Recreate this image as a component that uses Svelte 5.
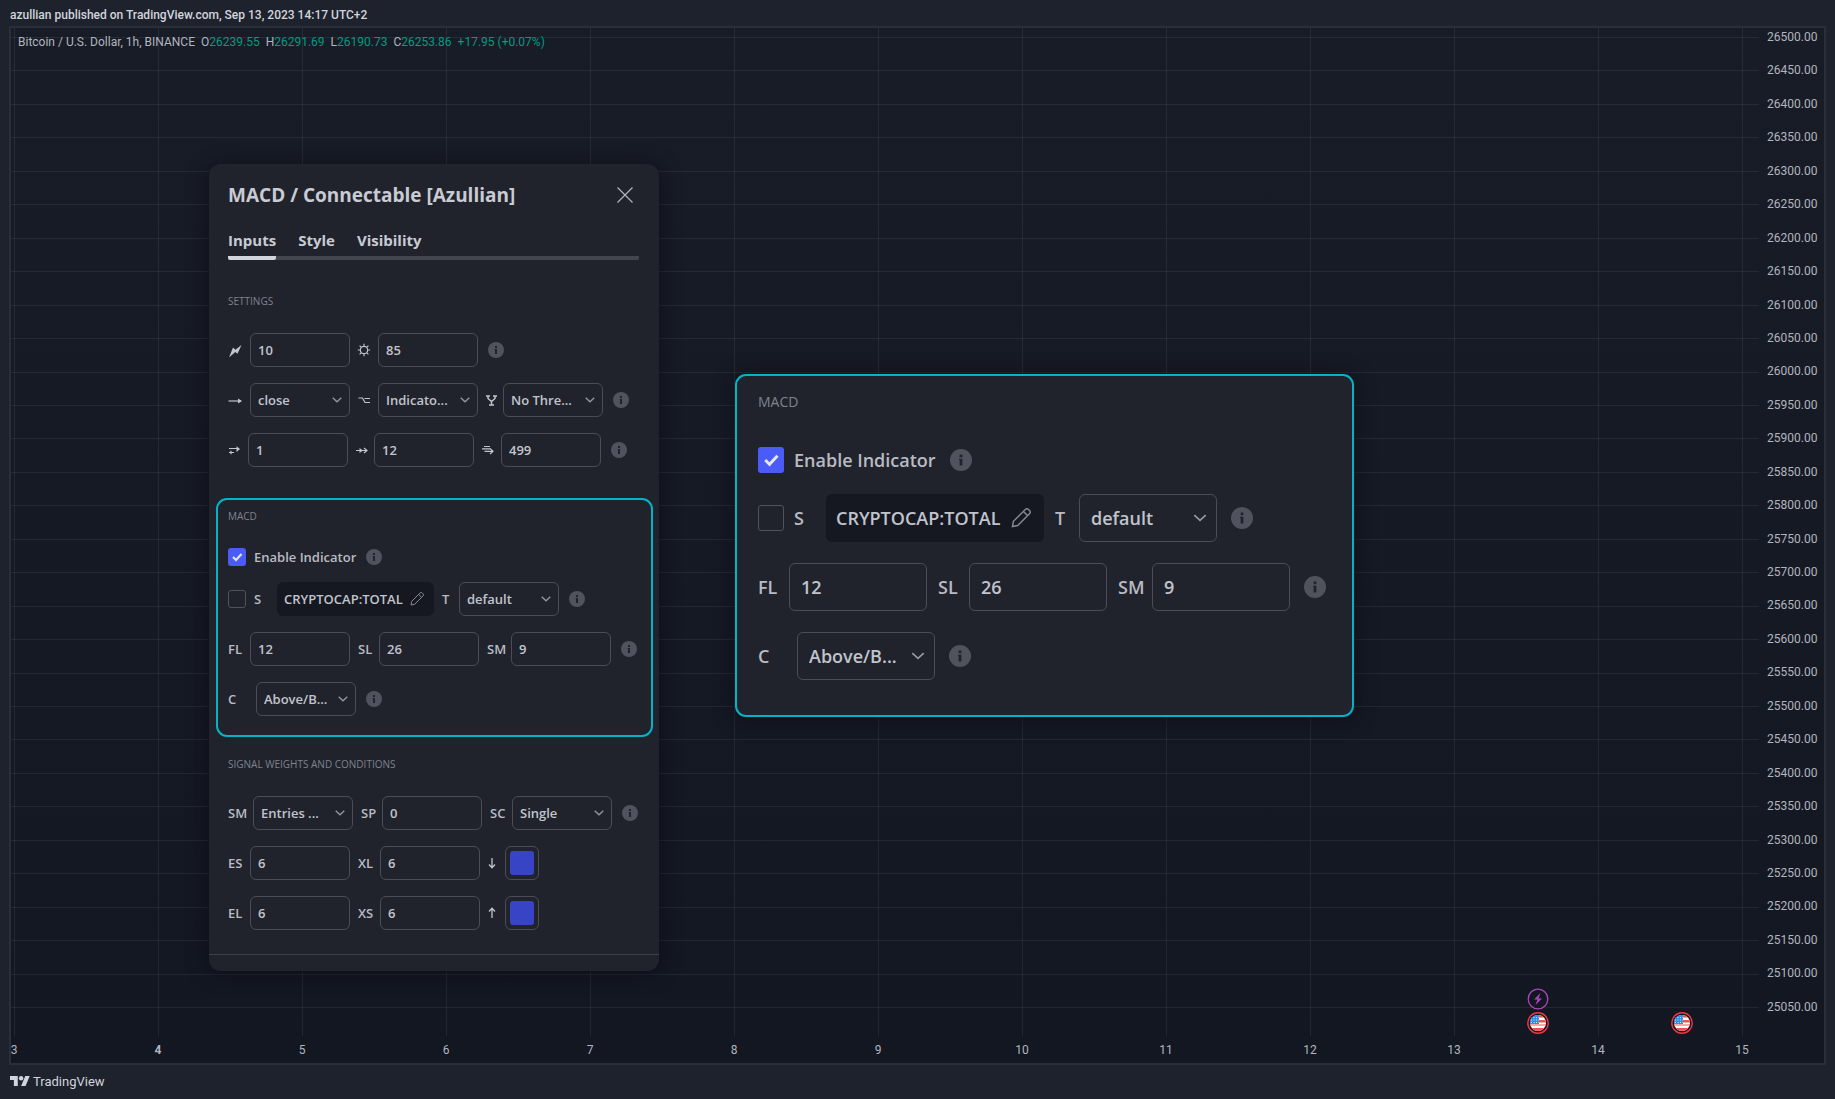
<script>
  const prices = Array.from({ length: 30 }, (_, i) => (26500 - i * 50).toFixed(2));
  const days = Array.from({ length: 13 }, (_, i) => i + 3);

  // plot coordinates as a share of the plotting area
  const xOf = (day) => ((3.5 + (day - 3) * 144) / 1748) * 100;
  const yOf = (row) => ((9.5 + row * 33.45) / 1008) * 100;

  const ohlc = [
    ['O', '26239.55'],
    ['H', '26291.69'],
    ['L', '26190.73'],
    ['C', '26253.86']
  ];
</script>

{#snippet info()}
  <button class="info" aria-label="More information">
    <svg viewBox="0 0 16 16"><circle cx="8" cy="8" r="8" fill="#50535e" /><path d="M7 4h2v2H7zM6.6 7H9v5H7V8h-.4z" fill="#20232c" /></svg>
  </button>
{/snippet}

{#snippet field(label, value)}
  <input class="box" type="text" aria-label={label} {value} />
{/snippet}

{#snippet choice(label, value)}
  <div class="choice">
    <select class="box" aria-label={label}><option>{value}</option></select>
    <svg class="chevron" viewBox="0 0 10 6"><path d="M.7.8 5 4.8 9.3.8" /></svg>
  </div>
{/snippet}

{#snippet icon(name)}
  <svg class="icon" viewBox="0 0 14 14" aria-hidden="true">
    {#if name === 'bolt'}
      <path class="solid" d="M13.500 2 9.500 10.800 7.300 9 1 14.500 5 4.500 7.400 6.800z" />
    {:else if name === 'sun'}
      <circle cx="7" cy="7" r="3.700" />
      <path d="M7 .8v2M7 11.200v2M.8 7h2M11.200 7h2M2.600 2.600l1.500 1.500M9.900 9.900l1.500 1.500M2.600 11.400l1.500-1.500M9.900 4.100l1.500-1.500" />
    {:else if name === 'right'}
      <path d="M.5 8h12.500" /><path class="solid" d="M10 5.500 14 8 10 10.500z" />
    {:else if name === 'option'}
      <path d="M1.500 5h4l2.500 4.500h5M7.500 5.500h5.500" />
    {:else if name === 'fork'}
      <path stroke-width="1.500" d="M1 3h4M8 3h4M3 3v2.500L6.500 8.500 10 5.500V3M6.500 8.500V11.700M4 12h5" />
    {:else if name === 'swap'}
      <path d="M1 5.500h10M1 9.500h5M3 7.800v3.400" /><path class="solid" d="M8.500 3.300 12 6 8.500 9V6z" />
    {:else if name === 'double'}
      <path d="M1 7.500h10.500M9 5l3 2.500L9 10" /><path class="solid" d="M4.500 5 8 7.500 4.500 10z" />
    {:else if name === 'layers'}
      <path d="M3 3.500h6M1 5.800h8M3.500 8.300h8M9 5.500l3 2.800L9 11" />
    {/if}
  </svg>
{/snippet}

{#snippet macd(id)}
  <h2>MACD</h2>
  <div class="check-row">
    <input type="checkbox" id="{id}-enable" checked />
    <label for="{id}-enable">Enable Indicator</label>
    {@render info()}
  </div>
  <div class="row r-symbol">
    <input type="checkbox" id="{id}-symbol" />
    <label for="{id}-symbol">S</label>
    <button class="symbol">
      CRYPTOCAP:TOTAL
      <svg viewBox="0 0 14 14"><path d="M1 13l.7-3.700L10.200.9a1.300 1.300 0 0 1 1.900 0l1 1a1.300 1.300 0 0 1 0 1.900L4.700 12.300zM8.700 2.500l2.800 2.800" /></svg>
    </button>
    <span class="tag">T</span>
    {@render choice('T', 'default')}
    {@render info()}
  </div>
  <div class="row r-lengths">
    <span>FL</span>
    {@render field('FL', '12')}
    <span class="tag">SL</span>
    {@render field('SL', '26')}
    <span class="tag">SM</span>
    {@render field('SM', '9')}
    {@render info()}
  </div>
  <div class="row r-condition">
    <span>C</span>
    {@render choice('C', 'Above/B...')}
    {@render info()}
  </div>
{/snippet}

{#snippet flag()}
  <svg viewBox="0 0 22 22">
    <defs><clipPath id="flag-disc"><circle cx="11" cy="11" r="8" /></clipPath></defs>
    <circle cx="11" cy="11" r="10.200" fill="#131722" stroke="#f23645" stroke-width="1.400" />
    <g clip-path="url(#flag-disc)">
      <path fill="#fff" d="M3 3h16v16H3z" />
      <path fill="#ef5350" d="M3 3h16v2.500H3zM3 8h16v2.500H3zM3 12.500h16v1H3zM3 16h16v3H3z" />
      <path fill="#2f8fea" d="M3 3h9v9H3z" />
      <path stroke="#cfe6fb" stroke-width="1" stroke-dasharray="1 1.500" d="M4 5.500h8M4 8h8M4 10.500h8" />
    </g>
  </svg>
{/snippet}

<div class="page">
  <header>azullian published on TradingView.com, Sep 13, 2023 14:17 UTC+2</header>

  <main>
    <div class="plot">
      <svg class="grid" aria-hidden="true">
        {#each days as day}
          <line x1="{xOf(day)}%" x2="{xOf(day)}%" y1="0" y2="100%" />
        {/each}
        {#each prices as _, i}
          <line x1="0" x2="100%" y1="{yOf(i)}%" y2="{yOf(i)}%" />
        {/each}
      </svg>
      <div class="legend">
        <span>Bitcoin / U.S. Dollar, 1h, BINANCE</span>
        {#each ohlc as [k, v]}<span>{k}<b>{v}</b></span>{/each}
        <b>+17.95 (+0.07%)</b>
      </div>
      <div class="event" style:left="{xOf(13.577)}%">
        <svg viewBox="0 0 22 22"><circle cx="11" cy="11" r="9.800" fill="#131722" stroke="#ab47bc" stroke-width="1.300" /><path fill="#ab47bc" d="M13.500 5 7 11.500h3.500L8.500 17 15 10.500h-3.500z" /></svg>
        {@render flag()}
      </div>
      <div class="event" style:left="{xOf(14.577)}%">{@render flag()}</div>
    </div>
    <div class="prices">{#each prices as p}<span>{p}</span>{/each}</div>
    <div class="days">{#each days as d}<span class:strong={d === 4}>{d}</span>{/each}</div>

    <section class="dialog" aria-label="Indicator settings">
      <div class="title">
        <h1>MACD / Connectable [Azullian]</h1>
        <button aria-label="Close"><svg viewBox="0 0 16 16"><path d="M.5.5l15 15M15.500.5l-15 15" /></svg></button>
      </div>
      <nav>
        <button class="active">Inputs</button>
        <button>Style</button>
        <button>Visibility</button>
      </nav>

      <div class="group settings">
        <h2>SETTINGS</h2>
        <div class="row r-one">
          {@render icon('bolt')}
          {@render field('Weight', '10')}
          <span class="tag">{@render icon('sun')}</span>
          {@render field('Brightness', '85')}
          {@render info()}
        </div>
        <div class="row r-two">
          {@render icon('right')}
          {@render choice('Source', 'close')}
          <span class="tag">{@render icon('option')}</span>
          {@render choice('Mode', 'Indicato...')}
          <span class="tag">{@render icon('fork')}</span>
          {@render choice('Threshold', 'No Thre...')}
          {@render info()}
        </div>
        <div class="row r-three">
          {@render icon('swap')}
          {@render field('Offset', '1')}
          <span class="tag">{@render icon('double')}</span>
          {@render field('Length', '12')}
          <span class="tag">{@render icon('layers')}</span>
          {@render field('Limit', '499')}
          {@render info()}
        </div>
      </div>

      <div class="group outlined">{@render macd('panel')}</div>

      <div class="group weights">
        <h2>SIGNAL WEIGHTS AND CONDITIONS</h2>
        <div class="row r-signal">
          <span>SM</span>
          {@render choice('SM', 'Entries ...')}
          <span class="tag">SP</span>
          {@render field('SP', '0')}
          <span class="tag">SC</span>
          {@render choice('SC', 'Single')}
          {@render info()}
        </div>
        {#each [['ES', 'XL', 'down'], ['EL', 'XS', 'up']] as [a, b, dir]}
          <div class="row r-exit">
            <span>{a}</span>
            {@render field(a, '6')}
            <span class="tag">{b}</span>
            {@render field(b, '6')}
            <span class="tag"><svg class="arrow" class:up={dir === 'up'} viewBox="0 0 8 12"><path d="M4 1v9.500M1 7.500l3 3.200 3-3.200" /></svg></span>
            <button class="swatch" aria-label="Colour {dir}"><span></span></button>
          </div>
        {/each}
      </div>
      <div class="foot"></div>
    </section>

    <section class="magnified group outlined" aria-label="MACD inputs">{@render macd('zoom')}</section>
  </main>

  <footer>
    <svg viewBox="0 4 36 18"><path d="M14 22H7V11H0V4h14v18zM28 22h-8l7.500-18h8L28 22z" /><circle cx="20" cy="8" r="4" /></svg>
    TradingView
  </footer>
</div>

<style>
  :global(body) {
    margin: 0;
  }
  .page,
  .page * {
    box-sizing: border-box;
  }
  .page {
    min-height: 100vh;
    display: flex;
    flex-direction: column;
    padding: 0 9px;
    background: #1e222d;
    color: #d1d4dc;
    font-family: 'Trebuchet MS', Roboto, sans-serif;
    font-size: 12px;
  }
  button,
  input,
  select {
    margin: 0;
    padding: 0;
    border: 0;
    background: none;
    color: inherit;
    font: inherit;
  }
  svg {
    display: block;
    flex: none;
  }
  header {
    height: 26px;
    padding: 0 1px;
    line-height: 30px;
    font-weight: 500;
    font-size: 12px;
    overflow: visible;
    white-space: nowrap;
  }
  main {
    position: relative;
    flex: 1;
    display: grid;
    grid-template: minmax(0, 1fr) 27px / minmax(0, 1fr) 65px;
    border: 2px solid #2a2e39;
    background: linear-gradient(#181c27, #131722);
    color: #b2b5be;
  }
  .plot {
    position: relative;
  }
  .grid {
    width: 100%;
    height: 100%;
    shape-rendering: crispEdges;
  }
  .grid line {
    stroke: #f0f3fa;
    stroke-opacity: 0.07;
  }
  .legend {
    position: absolute;
    top: 6px;
    left: 7px;
    display: flex;
    gap: 6px;
    line-height: 16px;
    white-space: nowrap;
  }
  .legend b {
    color: #089981;
    font-weight: 400;
  }
  .event {
    position: absolute;
    bottom: 2px;
    width: 22px;
    margin-left: -11px;
    display: grid;
    gap: 2px;
  }
  .prices {
    display: flex;
    flex-direction: column;
    justify-content: space-between;
    padding: 1px 8px 21px;
    line-height: 16px;
  }
  .days {
    display: flex;
    justify-content: space-between;
    padding-right: 14px;
    line-height: 28px;
  }
  .days span {
    display: flex;
    justify-content: center;
    width: 6px;
  }
  .days .strong {
    font-weight: 700;
  }

  .dialog {
    position: absolute;
    top: 136px;
    left: 198px;
    width: 450px;
    border-radius: 12px;
    background: #20232c;
    box-shadow: 0 2px 20px rgba(10, 12, 20, 0.7);
  }
  .title {
    display: flex;
    align-items: center;
    justify-content: space-between;
    height: 62px;
    padding: 0 26px 0 19px;
  }
  h1,
  nav,
  .group {
    font-family: 'Trebuchet MS', 'Open Sans', sans-serif;
  }
  h1 {
    margin: 0;
    font-size: 19px;
    font-weight: 700;
    color: #c9cbd3;
  }
  .title svg {
    width: 16px;
    height: 16px;
    fill: none;
    stroke: #b2b5be;
    stroke-width: 1.2;
  }
  nav {
    display: flex;
    gap: 22px;
    height: 34px;
    margin: 0 20px 0 19px;
    border-radius: 2px;
    background: linear-gradient(#434651, #434651) bottom / 100% 4px no-repeat;
    font-size: 15px;
    font-weight: 700;
    line-height: 26px;
    color: #c9cbd3;
  }
  nav button {
    padding-bottom: 6px;
  }
  nav .active {
    border-bottom: 4px solid #d1d4dc;
    border-radius: 2px;
    padding-bottom: 2px;
  }
  .group {
    --h: 34px;
    --pad: 7px;
    --dot: 16px;
    --lead: 10px;
    --tick: 18px;
    font-size: 13px;
    font-weight: 600;
    color: #b9bbc3;
  }
  h2 {
    margin: 0;
    font-size: 10px;
    font-weight: 400;
    line-height: 16px;
    color: #7f828c;
  }
  .settings {
    padding: 33px 19px 31px;
  }
  .settings h2,
  .weights h2 {
    margin-bottom: 24px;
  }
  .row {
    display: grid;
    align-items: center;
    height: var(--h);
    white-space: nowrap;
  }
  .row + .row {
    margin-top: 16px;
  }
  .r-two {
    grid-template-columns: 22px 100px 28px 100px 25px 100px auto;
  }
  .r-one {
    grid-template-columns: 22px 100px 28px 100px auto;
  }
  .r-three {
    grid-template-columns: 20px 100px 26px 100px 27px 100px auto;
  }
  .r-symbol {
    grid-template-columns: 26px 23px 157px 25px 100px auto;
  }
  .r-lengths {
    grid-template-columns: 22px 100px 29px 100px 32px 100px auto;
  }
  .r-condition {
    grid-template-columns: 28px 100px auto;
  }
  .r-signal {
    grid-template-columns: 25px 100px 29px 100px 30px 100px auto;
  }
  .r-exit {
    grid-template-columns: 22px 100px 30px 100px 25px 34px;
  }
  .tag {
    padding-left: 8px;
  }
  .settings .tag {
    padding-left: 7px;
  }
  .icon {
    width: 14px;
    height: 14px;
    fill: none;
    stroke: #c1c4cc;
    stroke-width: 1.2;
  }
  .icon .solid {
    fill: #c1c4cc;
    stroke: none;
  }
  .box {
    width: 100%;
    height: var(--h);
    padding: 0 var(--pad);
    border: 1px solid #4a4d57;
    border-radius: 6px;
    color: #c1c4cc;
    appearance: none;
    outline: 0;
  }
  .choice {
    display: grid;
    align-items: center;
  }
  .choice > * {
    grid-area: 1 / 1;
  }
  .chevron {
    width: 10px;
    height: 6px;
    margin-right: 8px;
    justify-self: end;
    pointer-events: none;
    fill: none;
    stroke: #9598a1;
    stroke-width: 1.3;
  }
  .info {
    width: var(--dot);
    height: var(--dot);
    margin-left: var(--lead);
  }
  input[type='checkbox'] {
    width: var(--tick);
    height: var(--tick);
    border: 1px solid #50535e;
    border-radius: 3px;
    appearance: none;
  }
  input[type='checkbox']:checked {
    border: 0;
    background: #4a5cf5 url("data:image/svg+xml,%3Csvg xmlns='http://www.w3.org/2000/svg' viewBox='0 0 18 18'%3E%3Cpath d='M5 9l3 3 5.500-6' fill='none' stroke='%23e6e8f0' stroke-width='2'/%3E%3C/svg%3E");
  }
  .outlined {
    margin: 0 6px 0 7px;
    padding: 8px 10px 19px;
    border: 2px solid #06b2c6;
    border-radius: 11px;
  }
  .check-row {
    display: flex;
    align-items: center;
    height: 18px;
    margin: 24px 0 16px;
  }
  .check-row label {
    margin-left: 8px;
  }
  .symbol {
    display: flex;
    align-items: center;
    justify-content: space-between;
    height: var(--h);
    padding: 0 10px 0 7px;
    border-radius: 6px;
    background: #151821;
    color: #c1c4cc;
  }
  .symbol svg {
    width: 14px;
    height: 14px;
    fill: none;
    stroke: #868993;
  }
  .weights {
    padding: 19px 19px 0;
  }
  .arrow {
    width: 8px;
    height: 12px;
    fill: none;
    stroke: #c1c4cc;
    stroke-width: 1.3;
  }
  .arrow.up {
    transform: rotate(180deg);
  }
  .swatch {
    display: grid;
    height: 34px;
    padding: 4px;
    border: 1px solid #4a4d57;
    border-radius: 6px;
  }
  .swatch span {
    border-radius: 3px;
    background: #3744c6;
  }
  .foot {
    height: 17px;
    margin-top: 24px;
    border-top: 1px solid #3c3f4a;
  }

  .magnified {
    --h: 48px;
    --pad: 11px;
    --dot: 22px;
    --lead: 14px;
    --tick: 26px;
    position: absolute;
    top: 346px;
    left: 724px;
    width: 619px;
    margin: 0;
    padding: 16px 21px 35px;
    background: #20232c;
    box-shadow: 0 2px 20px rgba(10, 12, 20, 0.7);
    font-size: 18px;
  }
  .magnified h2 {
    font-size: 14px;
    line-height: 20px;
  }
  .magnified .check-row {
    height: 26px;
    margin: 35px 0 21px;
  }
  .magnified .check-row label {
    margin-left: 10px;
  }
  .magnified .row + .row {
    margin-top: 21px;
  }
  .magnified .r-symbol {
    grid-template-columns: 36px 32px 218px 35px 138px auto;
  }
  .magnified .r-lengths {
    grid-template-columns: 31px 138px 42px 138px 45px 138px auto;
  }
  .magnified .r-condition {
    grid-template-columns: 39px 138px auto;
  }
  .magnified .tag {
    padding-left: 11px;
  }
  .magnified .symbol {
    padding: 0 13px 0 10px;
  }
  .magnified .symbol svg {
    width: 20px;
    height: 20px;
  }
  .magnified .chevron {
    width: 14px;
    height: 8px;
    margin-right: 10px;
  }

  footer {
    display: flex;
    align-items: center;
    gap: 3px;
    height: 34px;
    padding: 0 1px 2px;
    font-size: 13px;
  }
  footer svg {
    width: 20px;
    height: 10px;
    fill: #d1d4dc;
  }
</style>
